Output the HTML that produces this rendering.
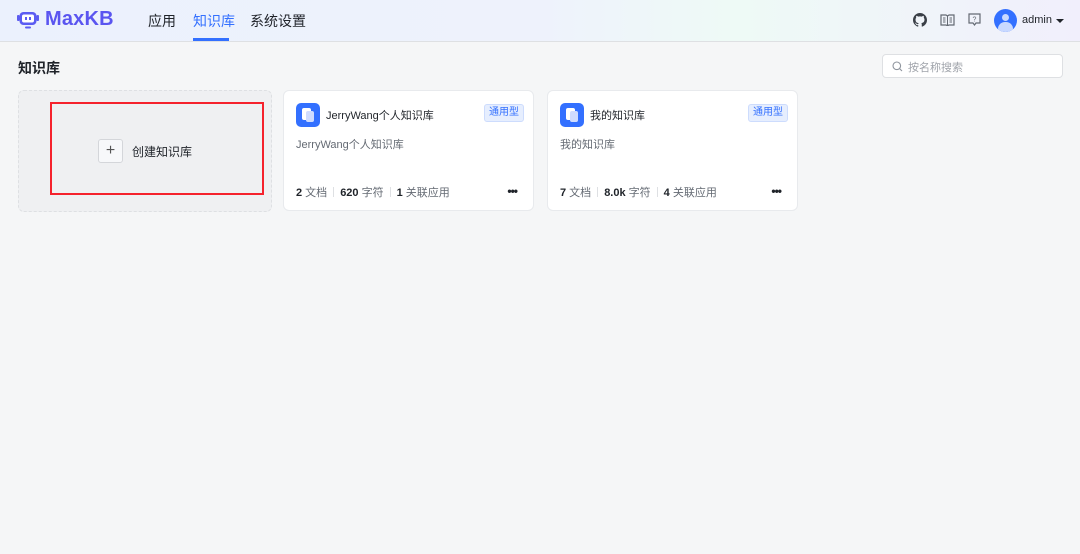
<!DOCTYPE html>
<html><head><meta charset="utf-8"><style>
*{box-sizing:border-box;margin:0;padding:0}
body{width:1080px;height:554px;background:#f5f6f7;font-family:"Liberation Sans","Noto Sans CJK SC",sans-serif;position:relative;overflow:hidden;color:#1f2329}
.hdr{position:absolute;left:0;top:0;width:1080px;height:42px;background:linear-gradient(90deg,#ebf1fd 0%,#eef2fc 50%,#eefaf6 68%,#f1effc 100%);border-bottom:1px solid #dee0e3}
.abs{position:absolute}
.nav{position:absolute;top:11px;font-size:14px;color:#1f2329}
.card{position:absolute;top:90px;height:121px;background:#fff;border-radius:6px;border:1px solid #e8eaed}
.ico{position:absolute;left:12px;top:12px;width:24px;height:24px;border-radius:5px;background:#3370ff}
.tag{position:absolute;right:9px;top:13px;font-size:10px;color:#3370ff;background:#e6eefe;border:1px solid #cddcfd;border-radius:3px;padding:2px 4px;line-height:12px}
.t{position:absolute;left:42px;top:16px;font-size:11px}
.d{position:absolute;left:12px;top:45px;font-size:11px;color:#646a73}
.f{position:absolute;left:12px;top:93px;font-size:11px;color:#646a73}
.f b{color:#1f2329}
.sep{display:inline-block;width:1px;height:10px;background:#dee0e3;margin:0 6px;vertical-align:-1px}
.dots{position:absolute;right:16px;top:93px;font-size:12px;font-weight:bold;letter-spacing:-1px;color:#1f2329}
</style></head><body>
<div class="hdr">
 <svg class="abs" style="left:17px;top:11px" width="22" height="19" viewBox="0 0 22 19"><rect x="0" y="4" width="2.5" height="6" rx="1" fill="#5c5cf0"/><rect x="19.5" y="4" width="2.5" height="6" rx="1" fill="#5c5cf0"/><rect x="2.5" y="1" width="17" height="13" rx="4" fill="#5b5cf2"/><rect x="5" y="3.5" width="12" height="8" rx="2" fill="#fff"/><rect x="8" y="6" width="2" height="3" fill="#5b5cf2"/><rect x="12" y="6" width="2" height="3" fill="#5b5cf2"/><rect x="8" y="15.5" width="6" height="2" rx="1" fill="#5b5cf2"/></svg>
 <div class="abs" style="left:45px;top:8px;font-size:20px;font-weight:bold;color:#5a55f0;letter-spacing:0.2px">MaxKB</div>
 <div class="nav" style="left:148px">应用</div>
 <div class="nav" style="left:193px;color:#3370ff">知识库</div>
 <div class="abs" style="left:193px;top:38px;width:36px;height:3px;background:#3370ff"></div>
 <div class="nav" style="left:250px">系统设置</div>
 <svg class="abs" style="left:913px;top:13px" width="14" height="14" viewBox="0 0 16 16"><path fill="#3a3f47" d="M8 0C3.6 0 0 3.6 0 8c0 3.5 2.3 6.5 5.5 7.6.4.1.5-.2.5-.4v-1.4c-2.2.5-2.7-1-2.7-1-.4-.9-.9-1.2-.9-1.2-.7-.5.1-.5.1-.5.8.1 1.2.8 1.2.8.7 1.2 1.9.9 2.300.7.1-.5.3-.9.5-1.1-1.8-.2-3.6-.9-3.6-4 0-.9.3-1.600.8-2.1-.1-.2-.4-1 .1-2.1 0 0 .7-.2 2.2.8.6-.2 1.3-.3 2-.3s1.4.1 2 .3c1.5-1 2.2-.8 2.2-.8.4 1.1.2 1.9.1 2.1.5.6.8 1.3.8 2.1 0 3.1-1.9 3.7-3.6 3.9.3.3.5.8.5 1.5v2.2c0 .2.1.5.6.4C13.7 14.5 16 11.5 16 8c0-4.4-3.6-8-8-8z"/></svg>
 <svg class="abs" style="left:940px;top:14px" width="15" height="12" viewBox="0 0 15 12"><path d="M1 1h5l1.5 1L9 1h5v10H9l-1.5 .8L6 11H1z" fill="none" stroke="#646a73" stroke-width="1.2"/><path d="M7.5 2v9.5M3 4h2.5M3 6h2.5M3 8h2.5M9.5 4H12M9.5 6H12M9.5 8H12" stroke="#646a73" stroke-width="1"/></svg>
 <svg class="abs" style="left:968px;top:13px" width="13" height="14" viewBox="0 0 13 14"><path d="M1 1h11v9H8l-1.5 2L5 10H1z" fill="none" stroke="#646a73" stroke-width="1.2"/><text x="6.5" y="8.5" font-size="7" text-anchor="middle" fill="#646a73" font-family="Liberation Sans">?</text></svg>
 <div class="abs" style="left:994px;top:9px;width:23px;height:23px;border-radius:50%;background:#3370ff;overflow:hidden"><div class="abs" style="left:8px;top:5px;width:7px;height:7px;border-radius:50%;background:#c9d9ff"></div><div class="abs" style="left:4px;top:13px;width:15px;height:10px;border-radius:7px 7px 0 0;background:#c9d9ff"></div></div>
 <div class="abs" style="left:1022px;top:14px;font-size:11px">admin</div>
 <div class="abs" style="left:1056px;top:19px;width:0;height:0;border-left:4px solid transparent;border-right:4px solid transparent;border-top:4px solid #1f2329"></div>
</div>
<div class="abs" style="left:18px;top:58px;font-size:14px;font-weight:bold">知识库</div>
<div class="abs" style="left:882px;top:54px;width:181px;height:24px;background:#fff;border:1px solid #dee0e3;border-radius:4px">
 <svg class="abs" style="left:9px;top:6px" width="11" height="11" viewBox="0 0 11 11"><circle cx="4.8" cy="4.8" r="3.8" fill="none" stroke="#8f959e" stroke-width="1.1"/><path d="M7.6 7.6l2.4 2.4" stroke="#8f959e" stroke-width="1.1"/></svg>
 <div class="abs" style="left:25px;top:4px;font-size:11px;color:#a0a4ab">按名称搜索</div>
</div>
<div class="abs" style="left:18px;top:90px;width:254px;height:122px;background:#eff0f2;border:1px dashed #dee0e3;border-radius:6px"></div>
<div class="abs" style="left:50px;top:102px;width:214px;height:93px;border:2px solid #f5222d"></div>
<div class="abs" style="left:98px;top:139px;width:25px;height:24px;background:#f7f8fa;border:1px solid #d4d6da;border-radius:3px;text-align:center;line-height:21px;font-size:16px;color:#555">+</div>
<div class="abs" style="left:132px;top:143px;font-size:12px;color:#1f2329">创建知识库</div>

<div class="card" style="left:283px;width:251px">
 <div class="ico"><div class="abs" style="left:6px;top:5px;width:9px;height:12px;background:#fff;border-radius:2px"></div><div class="abs" style="left:10px;top:8px;width:8px;height:11px;background:#cfdcff;border-radius:2px"></div></div>
 <div class="t">JerryWang个人知识库</div><div class="tag">通用型</div>
 <div class="d">JerryWang个人知识库</div>
 <div class="f"><b>2</b> 文档<span class="sep"></span><b>620</b> 字符<span class="sep"></span><b>1</b> 关联应用</div>
 <div class="dots">•••</div>
</div>
<div class="card" style="left:547px;width:251px">
 <div class="ico"><div class="abs" style="left:6px;top:5px;width:9px;height:12px;background:#fff;border-radius:2px"></div><div class="abs" style="left:10px;top:8px;width:8px;height:11px;background:#cfdcff;border-radius:2px"></div></div>
 <div class="t">我的知识库</div><div class="tag">通用型</div>
 <div class="d">我的知识库</div>
 <div class="f"><b>7</b> 文档<span class="sep"></span><b>8.0k</b> 字符<span class="sep"></span><b>4</b> 关联应用</div>
 <div class="dots">•••</div>
</div>
</body></html>
